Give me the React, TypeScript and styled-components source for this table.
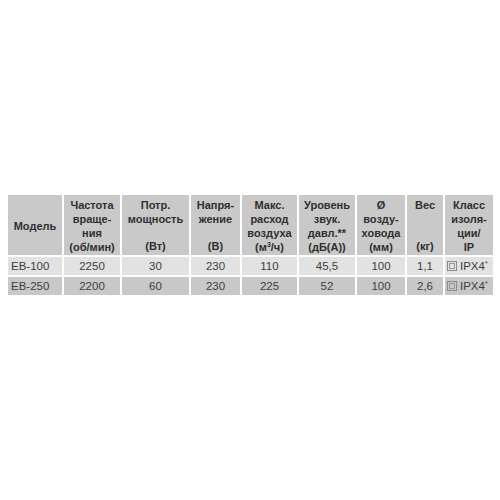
import React from 'react';
import styled, { createGlobalStyle } from 'styled-components';

const GlobalStyle = createGlobalStyle`
  html, body {
    margin: 0;
    padding: 0;
    background: #ffffff;
  }
  body {
    font-family: "Liberation Sans", Arial, sans-serif;
  }
`;

// -- Data --

interface Row {
  model: string;
  rpm: string;
  power: string;
  voltage: string;
  airflow: string;
  noise: string;
  duct: string;
  weight: string;
  ip: string;
}

const rows: Row[] = [
  { model: 'EB-100', rpm: '2250', power: '30', voltage: '230', airflow: '110', noise: '45,5', duct: '100', weight: '1,1', ip: 'IPX4' },
  { model: 'EB-250', rpm: '2200', power: '60', voltage: '230', airflow: '225', noise: '52', duct: '100', weight: '2,6', ip: 'IPX4' },
];

// -- Styled Components --

const Page = styled.div`
  width: 500px;
  height: 500px;
  padding: 195px 0 0 8px;
  box-sizing: border-box;
`;

const Table = styled.div`
  display: grid;
  grid-template-columns: 54px 56px 67px 49px 55px 56px 48px 36px 48px;
  grid-template-rows: 60px 18px 18px;
  column-gap: 2px;
  row-gap: 2px;
`;

const HeadCell = styled.div<{ $center?: boolean }>`
  background: #c9c9c9;
  color: #2f2f2f;
  font-size: 11px;
  font-weight: bold;
  line-height: 14px;
  text-align: center;
  padding: 3px 1px 2px;
  display: flex;
  flex-direction: column;
  align-items: center;
  justify-content: ${p => (p.$center ? 'center' : 'space-between')};
`;

const Cell = styled.div<{ $alt?: boolean; $left?: boolean }>`
  background: ${p => (p.$alt ? '#c8c8c8' : '#e2e2e2')};
  color: #3e3e3e;
  font-size: 11.5px;
  line-height: 18px;
  display: flex;
  align-items: center;
  justify-content: ${p => (p.$left ? 'flex-start' : 'center')};
  padding: 0 3px;
  white-space: nowrap;
`;

const IpCell = styled(Cell)`
  justify-content: flex-start;
  padding-left: 2px;
  gap: 3px;
`;

const IpBox = styled.span`
  width: 10px;
  height: 10px;
  box-sizing: border-box;
  border: 1px solid #8a8a8a;
  display: flex;
  align-items: center;
  justify-content: center;

  &::after {
    content: '';
    width: 4px;
    height: 4px;
    border: 1px solid #9a9a9a;
  }
`;

const Star = styled.sup`
  font-size: 7px;
  line-height: 0;
  vertical-align: 4px;
`;

const Sup = styled.sup`
  font-size: 7px;
  line-height: 0;
  vertical-align: 4px;
`;

// -- Component --

const App: React.FC = () => {
  return (
    <Page>
      <GlobalStyle />
      <Table>
        <HeadCell $center>Модель</HeadCell>
        <HeadCell>
          <span>Частота<br />враще-<br />ния</span>
          <span>(об/мин)</span>
        </HeadCell>
        <HeadCell>
          <span>Потр.<br />мощность</span>
          <span>(Вт)</span>
        </HeadCell>
        <HeadCell>
          <span>Напря-<br />жение</span>
          <span>(В)</span>
        </HeadCell>
        <HeadCell>
          <span>Макс.<br />расход<br />воздуха</span>
          <span>(м<Sup>3</Sup>/ч)</span>
        </HeadCell>
        <HeadCell>
          <span>Уровень<br />звук.<br />давл.**</span>
          <span>(дБ(А))</span>
        </HeadCell>
        <HeadCell>
          <span>Ø<br />возду-<br />ховода</span>
          <span>(мм)</span>
        </HeadCell>
        <HeadCell>
          <span>Вес</span>
          <span>(кг)</span>
        </HeadCell>
        <HeadCell>
          <span>Класс<br />изоля-<br />ции/</span>
          <span>IP</span>
        </HeadCell>

        {rows.map((r, i) => {
          const alt = i % 2 === 1;
          return (
            <React.Fragment key={r.model}>
              <Cell $alt={alt} $left>{r.model}</Cell>
              <Cell $alt={alt}>{r.rpm}</Cell>
              <Cell $alt={alt}>{r.power}</Cell>
              <Cell $alt={alt}>{r.voltage}</Cell>
              <Cell $alt={alt}>{r.airflow}</Cell>
              <Cell $alt={alt}>{r.noise}</Cell>
              <Cell $alt={alt}>{r.duct}</Cell>
              <Cell $alt={alt}>{r.weight}</Cell>
              <IpCell $alt={alt}>
                <IpBox />
                <span>{r.ip}<Star>*</Star></span>
              </IpCell>
            </React.Fragment>
          );
        })}
      </Table>
    </Page>
  );
};

export default App;
